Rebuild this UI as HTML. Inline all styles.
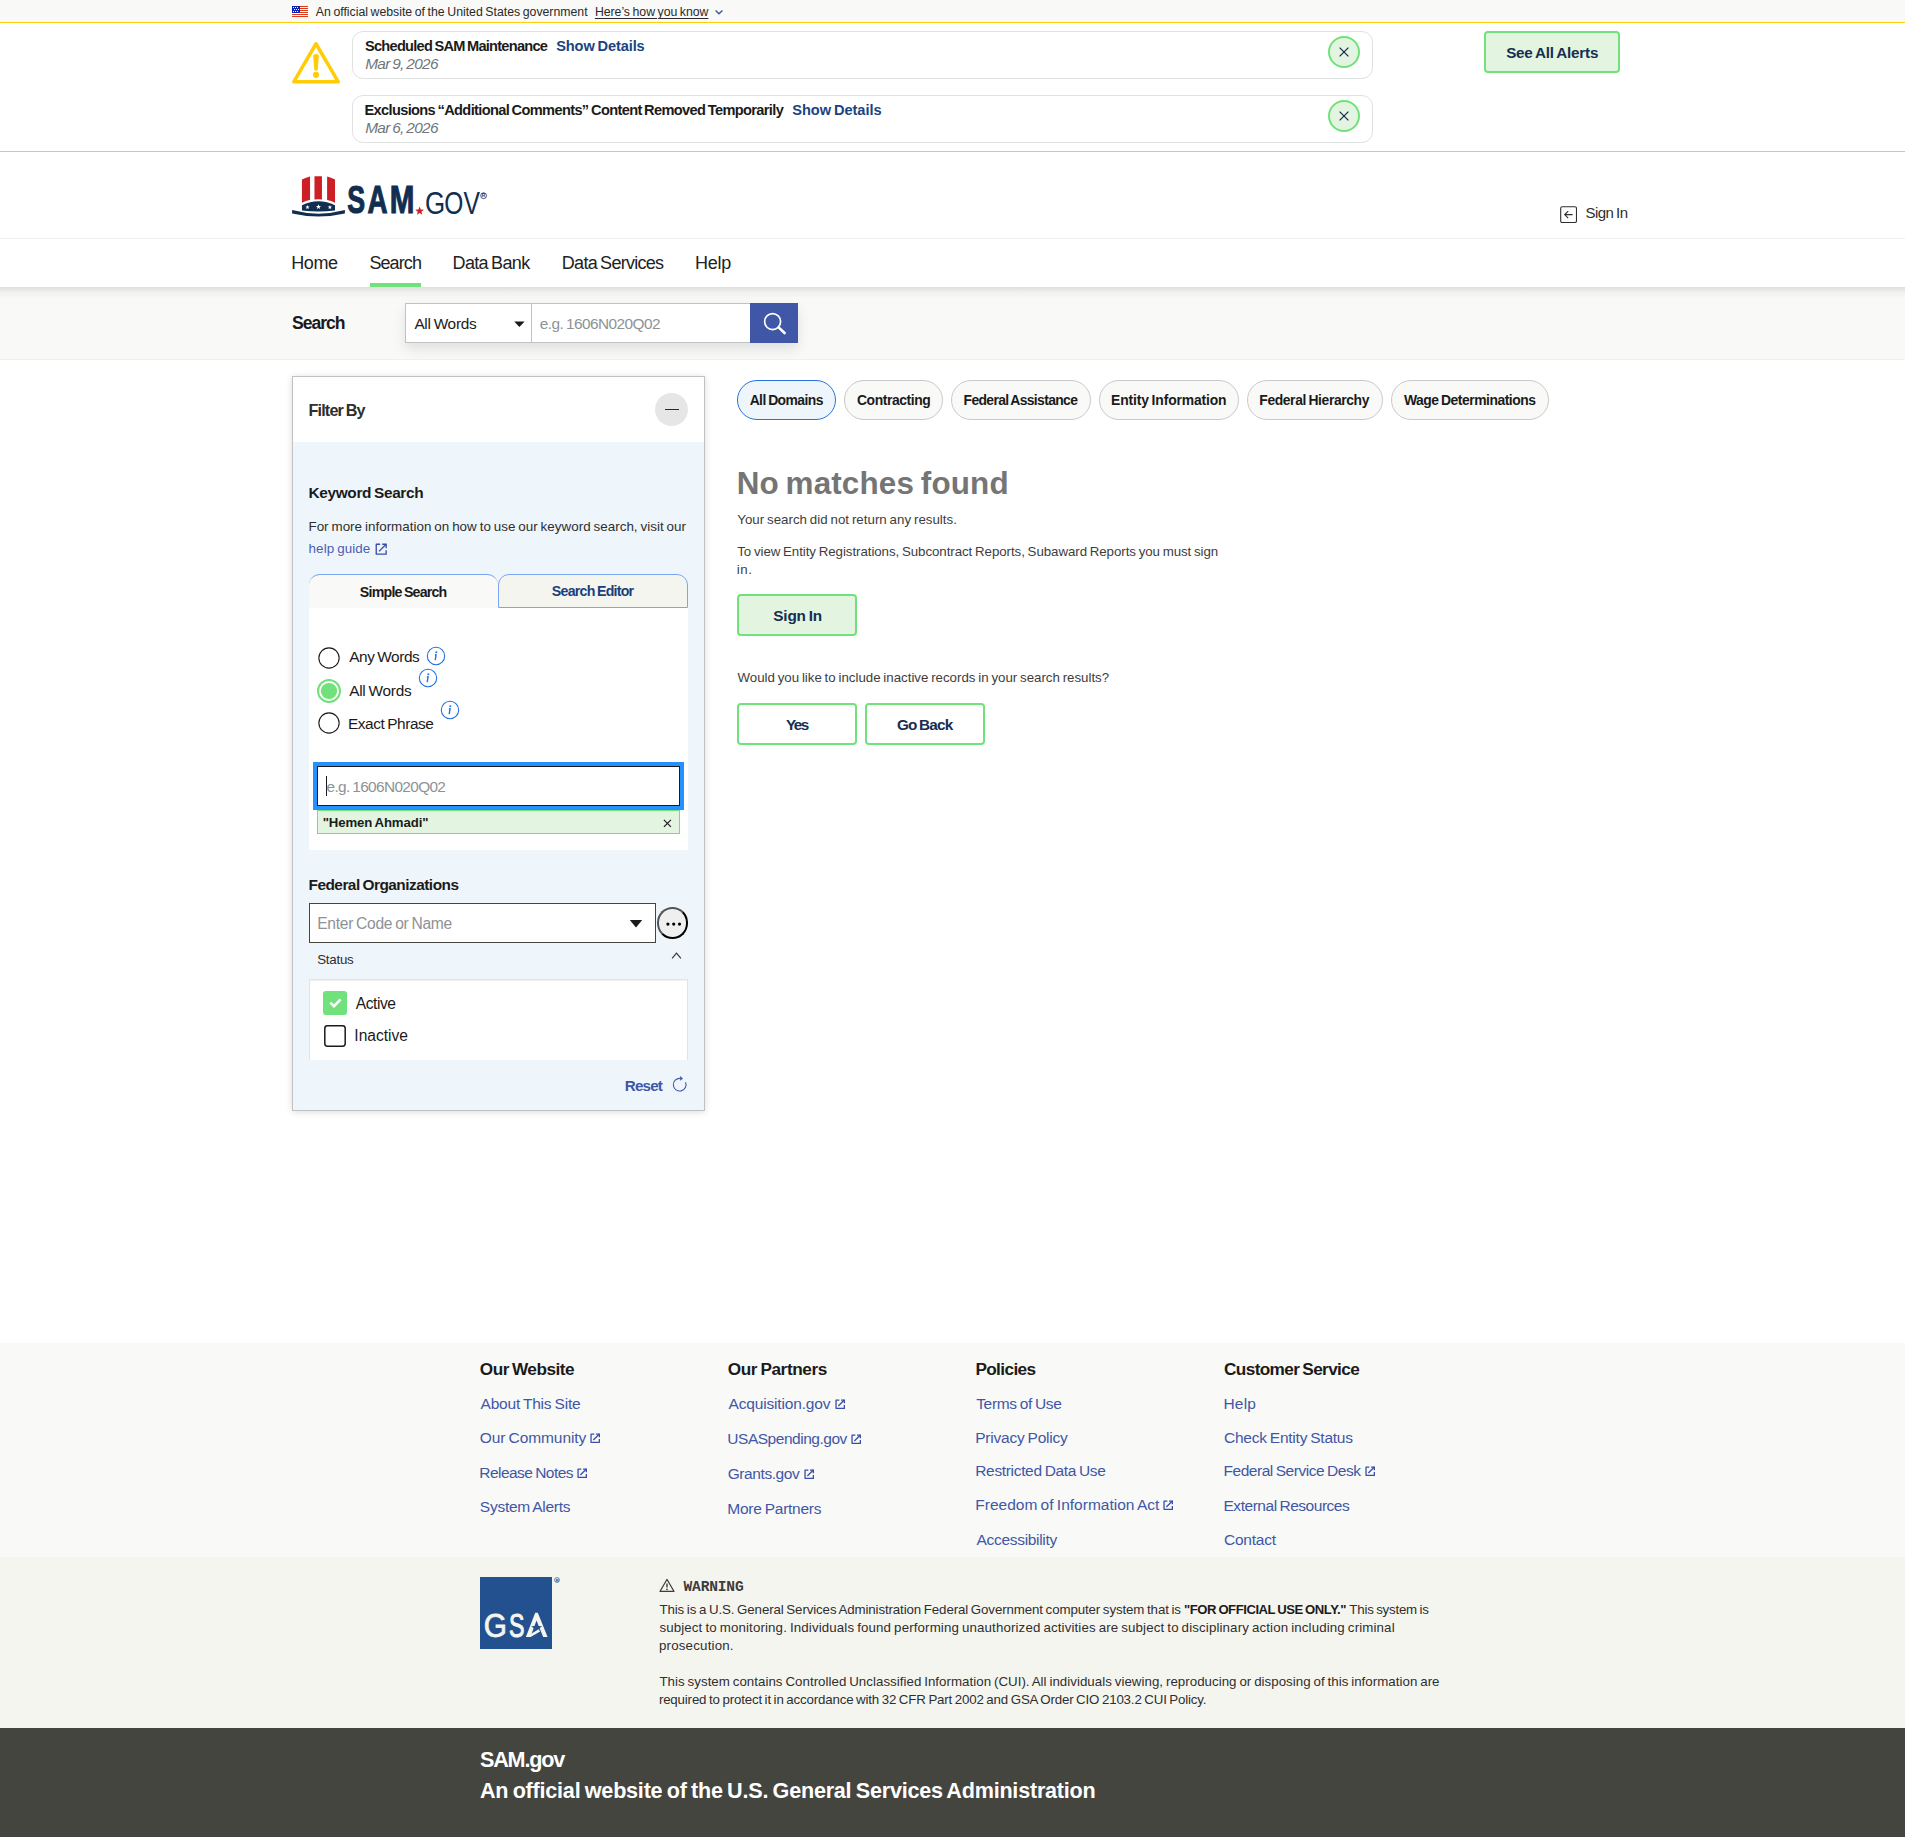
<!DOCTYPE html>
<html lang="en"><head><meta charset="utf-8"><title>SAM.gov | Search</title><style>
html,body{margin:0;padding:0}
body{width:1905px;height:1837px;position:relative;overflow:hidden;background:#fff;
font-family:"Liberation Sans",sans-serif;color:#1b1b1b}
.t{position:absolute;white-space:pre;display:block}
.b{position:absolute;box-sizing:content-box;display:block}
</style></head>
<body>
<div class="b" style="left:0px;top:0px;width:1905px;height:22px;background:#f9f9f7;"></div>
<svg class="b" style="left:292px;top:6px;" width="16" height="11" viewBox="0 0 16 11"><g shape-rendering="crispEdges"><rect width="16" height="11" fill="#fff"/><rect y="0" width="16" height="1" fill="#dc3a1c"/><rect y="2" width="16" height="1" fill="#dc3a1c"/><rect y="4" width="16" height="1" fill="#dc3a1c"/><rect y="6" width="16" height="1" fill="#dc3a1c"/><rect y="8" width="16" height="1" fill="#dc3a1c"/><rect y="10" width="16" height="1" fill="#dc3a1c"/><rect width="8" height="7" fill="#0d21b3"/><rect x="1" y="1" width="1" height="1" fill="#fff"/><rect x="3" y="1" width="1" height="1" fill="#fff"/><rect x="5" y="1" width="1" height="1" fill="#fff"/><rect x="2" y="3" width="1" height="1" fill="#fff"/><rect x="4" y="3" width="1" height="1" fill="#fff"/><rect x="6" y="3" width="1" height="1" fill="#fff"/><rect x="1" y="5" width="1" height="1" fill="#fff"/><rect x="3" y="5" width="1" height="1" fill="#fff"/><rect x="5" y="5" width="1" height="1" fill="#fff"/></g></svg>
<span class="t" style="left:315.80px;top:6.00px;font-size:12.3px;line-height:12.3px;letter-spacing:-0.012px;color:#2a2a2a;word-spacing:-0.80px;">An official website of the United States government</span>
<span class="t" style="left:594.92px;top:6.00px;font-size:12.3px;line-height:12.3px;letter-spacing:-0.041px;color:#2a2a2a;word-spacing:-0.80px;text-decoration:underline;text-underline-offset:1.5px;text-decoration-thickness:1px;">Here’s how you know</span>
<svg class="b" style="left:714px;top:7px;" width="10" height="10" viewBox="0 0 10 10"><path d="M1.6 3.4L5 6.8L8.4 3.4" fill="none" stroke="#3f57a6" stroke-width="1.4"/></svg>
<div class="b" style="left:0px;top:22px;width:1905px;height:1px;background:#ffcd07;"></div>
<div class="b" style="left:0px;top:151px;width:1905px;height:1px;background:#ffcd07;"></div>
<svg class="b" style="left:292px;top:40px;" width="48" height="46" viewBox="0 0 48 46"><path d="M24 3.75L46.25 41.85H1.75Z" fill="none" stroke="#ffcd07" stroke-width="3.5" stroke-linejoin="round"/><path d="M21.2 16.2Q21.2 14 24 14Q26.8 14 26.8 16.2L25.7 30.6H22.3Z" fill="#ffcd07"/><circle cx="24" cy="34.8" r="3.1" fill="#ffcd07"/></svg>
<div class="b" style="left:352px;top:31px;width:1019px;height:45.5px;border:1px solid #dfe1e2;border-radius:11px;background:#fff;"></div>
<span class="t" style="left:365.00px;top:39.00px;font-size:14.6px;line-height:14.6px;letter-spacing:-0.747px;color:#1b1b1b;word-spacing:-0.95px;font-weight:700;">Scheduled SAM Maintenance</span>
<span class="t" style="left:556.20px;top:39.00px;font-size:14.6px;line-height:14.6px;letter-spacing:-0.123px;color:#1a4480;word-spacing:-0.95px;font-weight:700;">Show Details</span>
<span class="t" style="left:365.14px;top:56.00px;font-size:15.4px;line-height:15.4px;letter-spacing:-0.673px;color:#71767a;word-spacing:-1.00px;font-style:italic;">Mar 9, 2026</span>
<svg class="b" style="left:1328px;top:35.7px;" width="32" height="32" viewBox="0 0 32 32"><circle cx="16" cy="16" r="15" fill="#e3f5e1" stroke="#70e17b" stroke-width="2"/><path d="M11.6 11.6L20.4 20.4M20.4 11.6L11.6 20.4" stroke="#162e51" stroke-width="1.3" fill="none"/></svg>
<div class="b" style="left:352px;top:95px;width:1019px;height:45.5px;border:1px solid #dfe1e2;border-radius:11px;background:#fff;"></div>
<span class="t" style="left:364.45px;top:103.00px;font-size:14.6px;line-height:14.6px;letter-spacing:-0.641px;color:#1b1b1b;word-spacing:-0.95px;font-weight:700;">Exclusions “Additional Comments” Content Removed Temporarily</span>
<span class="t" style="left:792.30px;top:103.00px;font-size:14.6px;line-height:14.6px;letter-spacing:-0.059px;color:#1a4480;word-spacing:-0.95px;font-weight:700;">Show Details</span>
<span class="t" style="left:365.14px;top:120.00px;font-size:15.4px;line-height:15.4px;letter-spacing:-0.673px;color:#71767a;word-spacing:-1.00px;font-style:italic;">Mar 6, 2026</span>
<svg class="b" style="left:1328px;top:99.7px;" width="32" height="32" viewBox="0 0 32 32"><circle cx="16" cy="16" r="15" fill="#e3f5e1" stroke="#70e17b" stroke-width="2"/><path d="M11.6 11.6L20.4 20.4M20.4 11.6L11.6 20.4" stroke="#162e51" stroke-width="1.3" fill="none"/></svg>
<div class="b" style="left:1484px;top:31px;width:132px;height:38px;border:2px solid #70e17b;border-radius:4px;background:#e3f5e1;"></div>
<span class="t" style="left:1506.18px;top:45.00px;font-size:15.2px;line-height:15.2px;letter-spacing:-0.200px;color:#162e51;word-spacing:-0.99px;font-weight:700;">See All Alerts</span>
<div class="b" style="left:0px;top:238px;width:1905px;height:1px;background:#f0f0ec;"></div>
<svg class="b" style="left:292px;top:174px;" width="53" height="44" viewBox="0 0 53 44"><path d="M9.96 5.55Q14 3.3 18.05 2.47V25.76Q14 26.6 9.96 28.7Z" fill="#cd2026"/><path d="M22.46 2.3Q26.2 2.05 29.95 2.3V25.4Q26.2 25.15 22.46 25.4Z" fill="#cd2026"/><path d="M35.1 2.6Q39 3.4 43.03 5.55V28.7Q39 26.7 35.1 26Z" fill="#cd2026"/><path d="M9.96 31.3Q26.5 23.2 43.03 31.3V36.6Q26.5 38.6 9.96 36.6Z" fill="#112e51"/><path d="M0.1 36.1Q26.5 43.2 52.9 36.1V39.5Q26.5 45.6 0.1 39.5Z" fill="#112e51"/><polygon points="15.50,30.90 16.07,32.42 17.69,32.49 16.42,33.50 16.85,35.06 15.50,34.17 14.15,35.06 14.58,33.50 13.31,32.49 14.93,32.42" fill="#fff"/><polygon points="26.50,30.20 27.17,31.98 29.07,32.07 27.58,33.25 28.09,35.08 26.50,34.03 24.91,35.08 25.42,33.25 23.93,32.07 25.83,31.98" fill="#fff"/><polygon points="37.90,30.90 38.47,32.42 40.09,32.49 38.82,33.50 39.25,35.06 37.90,34.17 36.55,35.06 36.98,33.50 35.71,32.49 37.33,32.42" fill="#fff"/></svg>
<svg class="b" style="left:340px;top:174px;" width="152" height="46" viewBox="0 0 152 46"><text transform="translate(7.17,39) scale(0.6748,1)" font-family="Liberation Sans, sans-serif" font-weight="700" font-size="39.6" fill="#112e51" stroke="#112e51" stroke-width="1.19">S</text><text transform="translate(27.40,39) scale(0.7022,1)" font-family="Liberation Sans, sans-serif" font-weight="700" font-size="39.6" fill="#112e51" stroke="#112e51" stroke-width="1.14">A</text><text transform="translate(49.78,39) scale(0.7477,1)" font-family="Liberation Sans, sans-serif" font-weight="700" font-size="39.6" fill="#112e51" stroke="#112e51" stroke-width="1.07">M</text><text transform="translate(84.90,39.6) scale(0.8060,1)" font-family="Liberation Sans, sans-serif" font-weight="400" font-size="32.2" fill="#112e51">G</text><text transform="translate(104.20,39.6) scale(0.7617,1)" font-family="Liberation Sans, sans-serif" font-weight="400" font-size="32.2" fill="#112e51">O</text><text transform="translate(123.44,39.6) scale(0.7670,1)" font-family="Liberation Sans, sans-serif" font-weight="400" font-size="32.2" fill="#112e51">V</text><polygon points="79.60,32.50 80.74,35.54 83.97,35.68 81.44,37.70 82.30,40.82 79.60,39.03 76.90,40.82 77.76,37.70 75.23,35.68 78.46,35.54" fill="#cd2026"/><circle cx="143.6" cy="21.7" r="2.9" fill="none" stroke="#112e51" stroke-width="0.8"/><text x="141.85" y="23.45" font-family="Liberation Sans, sans-serif" font-weight="700" font-size="4.8" fill="#112e51">R</text></svg>
<svg class="b" style="left:1560px;top:206.1px;" width="17.2" height="17.2" viewBox="0 0 17.2 17.2"><rect x="0.7" y="0.7" width="15.8" height="15.8" rx="1.6" fill="none" stroke="#2e2e2e" stroke-width="1.1"/><path d="M12.6 8.6H4.8M8.2 5.1L4.7 8.6L8.2 12.1" fill="none" stroke="#2e2e2e" stroke-width="1.1"/></svg>
<span class="t" style="left:1585.42px;top:205.00px;font-size:15.0px;line-height:15.0px;letter-spacing:-0.500px;color:#2e2e2e;word-spacing:-0.98px;">Sign In</span>
<span class="t" style="left:291.31px;top:254.00px;font-size:18.0px;line-height:18.0px;letter-spacing:-0.437px;color:#222;">Home</span>
<span class="t" style="left:369.44px;top:254.00px;font-size:18.0px;line-height:18.0px;letter-spacing:-0.916px;color:#222;">Search</span>
<span class="t" style="left:452.56px;top:254.00px;font-size:18.0px;line-height:18.0px;letter-spacing:-0.656px;color:#222;word-spacing:-1.17px;">Data Bank</span>
<span class="t" style="left:561.81px;top:254.00px;font-size:18.0px;line-height:18.0px;letter-spacing:-0.713px;color:#222;word-spacing:-1.17px;">Data Services</span>
<span class="t" style="left:695.06px;top:254.00px;font-size:18.0px;line-height:18.0px;letter-spacing:-0.277px;color:#222;">Help</span>
<div class="b" style="left:370px;top:283px;width:51px;height:4px;background:#70e17b;"></div>
<div class="b" style="left:0px;top:287px;width:1905px;height:73px;background:#f9f9f7;border-bottom:1px solid #f0f0ec;box-sizing:border-box;"></div>
<div class="b" style="left:0px;top:287px;width:1905px;height:12px;background:linear-gradient(rgba(0,0,0,.11),rgba(0,0,0,.035) 45%,rgba(0,0,0,0));"></div>
<span class="t" style="left:292.02px;top:315.00px;font-size:17.6px;line-height:17.6px;letter-spacing:-1.051px;color:#1b1b1b;font-weight:700;">Search</span>
<div class="b" style="left:405px;top:303px;width:393px;height:40px;box-shadow:0 6px 12px rgba(0,0,0,.10);"></div>
<div class="b" style="left:405px;top:303px;width:127px;height:40px;border:1px solid #c0c3c6;background:#fff;box-sizing:border-box;"></div>
<div class="b" style="left:532px;top:303px;width:218px;height:40px;border:1px solid #c0c3c6;border-left:0;border-right:0;background:#fff;box-sizing:border-box;"></div>
<span class="t" style="left:414.40px;top:316.00px;font-size:15.4px;line-height:15.4px;letter-spacing:-0.283px;color:#1b1b1b;word-spacing:-1.00px;">All Words</span>
<svg class="b" style="left:513px;top:320px;" width="13" height="9" viewBox="0 0 13 9"><path d="M1.2 1.4H11.6L6.4 7Z" fill="#1b1b1b"/></svg>
<span class="t" style="left:539.85px;top:316.00px;font-size:15.4px;line-height:15.4px;letter-spacing:-0.556px;color:#8d9297;word-spacing:-1.00px;">e.g. 1606N020Q02</span>
<div class="b" style="left:750px;top:303px;width:48px;height:40px;background:#3f57a6;"></div>
<svg class="b" style="left:763.2px;top:311.6px;" width="24" height="24" viewBox="0 0 24 24"><circle cx="9.6" cy="9.6" r="8" fill="none" stroke="#fff" stroke-width="1.7"/><path d="M15.6 15.4L21.6 21" stroke="#fff" stroke-width="2.6" stroke-linecap="round"/></svg>
<div class="b" style="left:292px;top:376px;width:411px;height:732.5px;border:1px solid #bfc1c3;background:#eff6fb;box-shadow:0 1px 7px rgba(0,0,0,.14);"></div>
<div class="b" style="left:293px;top:377px;width:411px;height:65px;background:#fff;"></div>
<span class="t" style="left:308.45px;top:402.00px;font-size:16.2px;line-height:16.2px;letter-spacing:-0.832px;color:#2e2e2e;word-spacing:-1.05px;font-weight:700;">Filter By</span>
<div class="b" style="left:655px;top:393px;width:33px;height:33px;border-radius:50%;background:#e6e6e6;"></div>
<div class="b" style="left:665px;top:408.7px;width:14px;height:1.4px;background:#162e51;"></div>
<span class="t" style="left:308.50px;top:485.00px;font-size:15.4px;line-height:15.4px;letter-spacing:-0.345px;color:#1b1b1b;word-spacing:-1.00px;font-weight:700;">Keyword Search</span>
<span class="t" style="left:308.43px;top:520.00px;font-size:13.4px;line-height:13.4px;letter-spacing:0.025px;color:#2e2e2e;word-spacing:-0.87px;">For more information on how to use our keyword search, visit our</span>
<span class="t" style="left:308.60px;top:542.00px;font-size:13.4px;line-height:13.4px;letter-spacing:0.084px;color:#4a5db3;word-spacing:-0.87px;">help guide</span>
<svg class="b" style="left:374.8px;top:542.6px;" width="12.4" height="12.4" viewBox="0 0 12 12"><g fill="none" stroke="#3a4fa8" stroke-width="1.31" stroke-linejoin="miter"><path d="M5 1.2H1.2V10.8H10.8V7" stroke-linejoin="round"/><path d="M7 1.2H10.8V5"/><path d="M10.8 1.2L3.9 8.1"/></g></svg>
<div class="b" style="left:309px;top:574px;width:189px;height:34px;background:#f9f9f7;border-top:1px solid #7ba6f4;border-radius:11px 11px 0 0;box-sizing:border-box;"></div>
<div class="b" style="left:498px;top:574px;width:190px;height:34px;background:#f5f5f0;border:1px solid #7ba6f4;border-radius:11px 11px 0 0;box-sizing:border-box;"></div>
<span class="t" style="left:359.86px;top:585.00px;font-size:14.2px;line-height:14.2px;letter-spacing:-0.788px;color:#1b1b1b;word-spacing:-0.92px;font-weight:700;">Simple Search</span>
<span class="t" style="left:551.86px;top:584.00px;font-size:14.2px;line-height:14.2px;letter-spacing:-0.755px;color:#1a3f7d;word-spacing:-0.92px;font-weight:700;">Search Editor</span>
<div class="b" style="left:309px;top:608px;width:379px;height:242px;background:#fff;"></div>
<svg class="b" style="left:316px;top:645px;" width="26" height="26" viewBox="0 0 26 26"><circle cx="13" cy="13" r="10.15" fill="#fff" stroke="#1b1b1b" stroke-width="1.1"/></svg>
<span class="t" style="left:349.20px;top:649.00px;font-size:15.4px;line-height:15.4px;letter-spacing:-0.431px;color:#1b1b1b;word-spacing:-1.00px;">Any Words</span>
<svg class="b" style="left:316px;top:677.75px;" width="26" height="26" viewBox="0 0 26 26"><circle cx="13" cy="13" r="11.0" fill="#fff" stroke="#70e17b" stroke-width="2"/><circle cx="13" cy="13" r="8.1" fill="#70e17b"/></svg>
<span class="t" style="left:349.20px;top:683.00px;font-size:15.4px;line-height:15.4px;letter-spacing:-0.252px;color:#1b1b1b;word-spacing:-1.00px;">All Words</span>
<svg class="b" style="left:316px;top:710.25px;" width="26" height="26" viewBox="0 0 26 26"><circle cx="13" cy="13" r="10.15" fill="#fff" stroke="#1b1b1b" stroke-width="1.1"/></svg>
<span class="t" style="left:347.97px;top:716.00px;font-size:15.4px;line-height:15.4px;letter-spacing:-0.420px;color:#1b1b1b;word-spacing:-1.00px;">Exact Phrase</span>
<svg class="b" style="left:426.1px;top:646.4px;" width="20" height="20" viewBox="0 0 20 20"><circle cx="10" cy="10" r="8.7" fill="none" stroke="#2672de" stroke-width="1.1"/><circle cx="10.3" cy="6.2" r="1.0" fill="#2672de"/><path d="M8.9 8.8L10.1 8.7L9.2 14.2" fill="none" stroke="#2672de" stroke-width="1.4" stroke-linejoin="round"/></svg>
<svg class="b" style="left:418.2px;top:667.7px;" width="20" height="20" viewBox="0 0 20 20"><circle cx="10" cy="10" r="8.7" fill="none" stroke="#2672de" stroke-width="1.1"/><circle cx="10.3" cy="6.2" r="1.0" fill="#2672de"/><path d="M8.9 8.8L10.1 8.7L9.2 14.2" fill="none" stroke="#2672de" stroke-width="1.4" stroke-linejoin="round"/></svg>
<svg class="b" style="left:440.2px;top:700.2px;" width="20" height="20" viewBox="0 0 20 20"><circle cx="10" cy="10" r="8.7" fill="none" stroke="#2672de" stroke-width="1.1"/><circle cx="10.3" cy="6.2" r="1.0" fill="#2672de"/><path d="M8.9 8.8L10.1 8.7L9.2 14.2" fill="none" stroke="#2672de" stroke-width="1.4" stroke-linejoin="round"/></svg>
<div class="b" style="left:313.3px;top:762.4px;width:362.8px;height:39.8px;border:4px solid #2491ff;background:#fff;"></div>
<div class="b" style="left:317px;top:766px;width:361px;height:38px;border:1px solid #1b1b1b;background:#fff;"></div>
<div class="b" style="left:326.2px;top:776.2px;width:1px;height:20px;background:#1b1b1b;"></div>
<span class="t" style="left:326.55px;top:779.00px;font-size:15.4px;line-height:15.4px;letter-spacing:-0.646px;color:#8d9297;word-spacing:-1.00px;">e.g. 1606N020Q02</span>
<div class="b" style="left:317px;top:810px;width:361px;height:21.5px;border:1px solid #70e17b;background:#e3f5e1;"></div>
<span class="t" style="left:322.64px;top:816.00px;font-size:13.2px;line-height:13.2px;letter-spacing:-0.101px;color:#1b1b1b;word-spacing:-0.86px;font-weight:700;">"Hemen Ahmadi"</span>
<svg class="b" style="left:663px;top:819px;" width="9" height="9" viewBox="0 0 9 9"><path d="M0.9 0.9L7.9 7.9M7.9 0.9L0.9 7.9" stroke="#1b1b1b" stroke-width="1.2" fill="none"/></svg>
<span class="t" style="left:308.50px;top:877.00px;font-size:15.4px;line-height:15.4px;letter-spacing:-0.508px;color:#1b1b1b;word-spacing:-1.00px;font-weight:700;">Federal Organizations</span>
<div class="b" style="left:309px;top:903px;width:345px;height:38px;border:1px solid #454540;background:#fff;"></div>
<span class="t" style="left:317.25px;top:916.00px;font-size:15.6px;line-height:15.6px;letter-spacing:-0.300px;color:#8d9297;word-spacing:-1.01px;">Enter Code or Name</span>
<svg class="b" style="left:629px;top:918.5px;" width="14" height="10" viewBox="0 0 14 10"><path d="M0.8 1H13.2L7 8.6Z" fill="#1b1b1b"/></svg>
<div class="b" style="left:657px;top:907px;width:27px;height:27.5px;border:2px outset #000;border-radius:50%;background:#efefef;"></div>
<svg class="b" style="left:664.5px;top:921px;" width="18" height="6" viewBox="0 0 18 6"><circle cx="2.9" cy="3.1" r="1.6" fill="#000"/><circle cx="8.7" cy="3.1" r="1.6" fill="#000"/><circle cx="14.5" cy="3.1" r="1.6" fill="#000"/></svg>
<span class="t" style="left:317.15px;top:953.00px;font-size:13.3px;line-height:13.3px;letter-spacing:-0.228px;color:#2e2e2e;">Status</span>
<svg class="b" style="left:671px;top:950.6px;" width="12" height="9" viewBox="0 0 12 9"><path d="M1.1 7.3L5.5 2.2L9.9 7.3" fill="none" stroke="#2e2e2e" stroke-width="1.1"/></svg>
<div class="b" style="left:309px;top:979px;width:377px;height:80px;background:#fff;border:1px solid #e3e3e3;border-bottom:0;box-shadow:inset 0 1px 1px rgba(0,0,0,.06);"></div>
<div class="b" style="left:323.3px;top:991.3px;width:23.6px;height:23.6px;background:#70e17b;border-radius:3px;"></div>
<svg class="b" style="left:327.8px;top:996.6px;" width="15" height="12" viewBox="0 0 15 12"><path d="M2.3 5.6L6 9.2L12.6 2.4" fill="none" stroke="#fff" stroke-width="2.7"/></svg>
<span class="t" style="left:355.75px;top:996.00px;font-size:15.6px;line-height:15.6px;letter-spacing:-0.462px;color:#1b1b1b;">Active</span>
<svg class="b" style="left:323px;top:1024px;" width="24" height="24" viewBox="0 0 24 24"><rect x="1.8" y="1.8" width="20.4" height="20.4" rx="2.6" fill="#fff" stroke="#1b1b1b" stroke-width="1.5"/></svg>
<span class="t" style="left:354.35px;top:1028.00px;font-size:15.6px;line-height:15.6px;letter-spacing:-0.025px;color:#1b1b1b;">Inactive</span>
<span class="t" style="left:624.76px;top:1078.00px;font-size:15.2px;line-height:15.2px;letter-spacing:-0.810px;color:#3f57a6;font-weight:700;">Reset</span>
<svg class="b" style="left:672px;top:1075px;" width="18" height="18" viewBox="0 0 18 18"><path d="M13.55 7.2A6.35 6.35 0 1 1 8.2 3.35" fill="none" stroke="#3f57a6" stroke-width="1.1"/><path d="M8.1 1.1L11 3.4L8.1 5.8Z" fill="#3f57a6"/></svg>
<div class="b" style="left:737px;top:380px;width:96.75px;height:38px;border:1px solid #2672de;background:#eff6fb;border-radius:20px;"></div>
<span class="t" style="left:749.65px;top:394.00px;font-size:13.9px;line-height:13.9px;letter-spacing:-0.554px;color:#1b1b1b;word-spacing:-0.90px;font-weight:700;">All Domains</span>
<div class="b" style="left:844.25px;top:380px;width:96.75px;height:38px;border:1px solid #c9c9c9;background:#f9f9f7;border-radius:20px;"></div>
<span class="t" style="left:856.94px;top:394.00px;font-size:13.9px;line-height:13.9px;letter-spacing:-0.402px;color:#1b1b1b;font-weight:700;">Contracting</span>
<div class="b" style="left:951px;top:380px;width:137.75px;height:38px;border:1px solid #c9c9c9;background:#f9f9f7;border-radius:20px;"></div>
<span class="t" style="left:963.60px;top:394.00px;font-size:13.9px;line-height:13.9px;letter-spacing:-0.642px;color:#1b1b1b;word-spacing:-0.90px;font-weight:700;">Federal Assistance</span>
<div class="b" style="left:1099.2px;top:380px;width:137.5999999999999px;height:38px;border:1px solid #c9c9c9;background:#f9f9f7;border-radius:20px;"></div>
<span class="t" style="left:1111.10px;top:394.00px;font-size:13.9px;line-height:13.9px;letter-spacing:-0.146px;color:#1b1b1b;word-spacing:-0.90px;font-weight:700;">Entity Information</span>
<div class="b" style="left:1247px;top:380px;width:133.5999999999999px;height:38px;border:1px solid #c9c9c9;background:#f9f9f7;border-radius:20px;"></div>
<span class="t" style="left:1259.30px;top:394.00px;font-size:13.9px;line-height:13.9px;letter-spacing:-0.399px;color:#1b1b1b;word-spacing:-0.90px;font-weight:700;">Federal Hierarchy</span>
<div class="b" style="left:1391.2px;top:380px;width:155.79999999999995px;height:38px;border:1px solid #c9c9c9;background:#f9f9f7;border-radius:20px;"></div>
<span class="t" style="left:1403.90px;top:394.00px;font-size:13.9px;line-height:13.9px;letter-spacing:-0.475px;color:#1b1b1b;word-spacing:-0.90px;font-weight:700;">Wage Determinations</span>
<span class="t" style="left:736.66px;top:468.00px;font-size:31.4px;line-height:31.4px;letter-spacing:0.145px;color:#757575;word-spacing:-2.04px;font-weight:700;">No matches found</span>
<span class="t" style="left:737.23px;top:513.00px;font-size:13.3px;line-height:13.3px;letter-spacing:0.017px;color:#3d3d3d;word-spacing:-0.86px;">Your search did not return any results.</span>
<span class="t" style="left:737.23px;top:545.00px;font-size:13.3px;line-height:13.3px;letter-spacing:-0.060px;color:#3d3d3d;word-spacing:-0.86px;">To view Entity Registrations, Subcontract Reports, Subaward Reports you must sign</span>
<span class="t" style="left:736.64px;top:563.00px;font-size:13.3px;line-height:13.3px;letter-spacing:0.665px;color:#3d3d3d;">in.</span>
<div class="b" style="left:737px;top:594px;width:116px;height:38px;border:2px solid #70e17b;border-radius:4px;background:#e3f5e1;"></div>
<span class="t" style="left:773.33px;top:608.00px;font-size:15.3px;line-height:15.3px;letter-spacing:-0.192px;color:#162e51;word-spacing:-0.99px;font-weight:700;">Sign In</span>
<span class="t" style="left:737.47px;top:671.00px;font-size:13.3px;line-height:13.3px;letter-spacing:-0.013px;color:#3d3d3d;word-spacing:-0.86px;">Would you like to include inactive records in your search results?</span>
<div class="b" style="left:737px;top:703px;width:116px;height:38px;border:2px solid #70e17b;border-radius:4px;background:#fff;"></div>
<span class="t" style="left:786.02px;top:717.00px;font-size:15.3px;line-height:15.3px;letter-spacing:-1.525px;color:#162e51;font-weight:700;">Yes</span>
<div class="b" style="left:865px;top:703px;width:116px;height:38px;border:2px solid #70e17b;border-radius:4px;background:#fff;"></div>
<span class="t" style="left:896.89px;top:717.00px;font-size:15.3px;line-height:15.3px;letter-spacing:-0.787px;color:#162e51;word-spacing:-0.99px;font-weight:700;">Go Back</span>
<div class="b" style="left:0px;top:1343px;width:1905px;height:214px;background:#f9f9f7;"></div>
<div class="b" style="left:0px;top:1557px;width:1905px;height:171px;background:#f5f5f0;"></div>
<div class="b" style="left:0px;top:1728px;width:1905px;height:109px;background:#454540;"></div>
<span class="t" style="left:479.81px;top:1361.00px;font-size:17.2px;line-height:17.2px;letter-spacing:-0.510px;color:#1b1b1b;word-spacing:-1.12px;font-weight:700;">Our Website</span>
<span class="t" style="left:480.50px;top:1396.00px;font-size:15.5px;line-height:15.5px;letter-spacing:-0.189px;color:#3f57a6;word-spacing:-1.01px;">About This Site</span>
<span class="t" style="left:479.80px;top:1430.00px;font-size:15.5px;line-height:15.5px;letter-spacing:-0.090px;color:#3f57a6;word-spacing:-1.01px;">Our Community</span>
<svg class="b" style="left:590.3px;top:1432.75px;" width="10.4" height="10.4" viewBox="0 0 12 12"><g fill="none" stroke="#3a4fa8" stroke-width="1.50" stroke-linejoin="miter"><path d="M5 1.2H1.2V10.8H10.8V7" stroke-linejoin="round"/><path d="M7 1.2H10.8V5"/><path d="M10.8 1.2L3.9 8.1"/></g></svg>
<span class="t" style="left:479.26px;top:1465.00px;font-size:15.5px;line-height:15.5px;letter-spacing:-0.533px;color:#3f57a6;word-spacing:-1.01px;">Release Notes</span>
<svg class="b" style="left:576.8px;top:1467.5px;" width="10.4" height="10.4" viewBox="0 0 12 12"><g fill="none" stroke="#3a4fa8" stroke-width="1.50" stroke-linejoin="miter"><path d="M5 1.2H1.2V10.8H10.8V7" stroke-linejoin="round"/><path d="M7 1.2H10.8V5"/><path d="M10.8 1.2L3.9 8.1"/></g></svg>
<span class="t" style="left:479.80px;top:1499.00px;font-size:15.5px;line-height:15.5px;letter-spacing:-0.250px;color:#3f57a6;word-spacing:-1.01px;">System Alerts</span>
<span class="t" style="left:727.81px;top:1361.00px;font-size:17.2px;line-height:17.2px;letter-spacing:-0.403px;color:#1b1b1b;word-spacing:-1.12px;font-weight:700;">Our Partners</span>
<span class="t" style="left:728.50px;top:1396.00px;font-size:15.5px;line-height:15.5px;letter-spacing:-0.160px;color:#3f57a6;">Acquisition.gov</span>
<svg class="b" style="left:834.55px;top:1398.75px;" width="10.4" height="10.4" viewBox="0 0 12 12"><g fill="none" stroke="#3a4fa8" stroke-width="1.50" stroke-linejoin="miter"><path d="M5 1.2H1.2V10.8H10.8V7" stroke-linejoin="round"/><path d="M7 1.2H10.8V5"/><path d="M10.8 1.2L3.9 8.1"/></g></svg>
<span class="t" style="left:727.34px;top:1431.00px;font-size:15.5px;line-height:15.5px;letter-spacing:-0.480px;color:#3f57a6;">USASpending.gov</span>
<svg class="b" style="left:851.0999999999999px;top:1433.75px;" width="10.4" height="10.4" viewBox="0 0 12 12"><g fill="none" stroke="#3a4fa8" stroke-width="1.50" stroke-linejoin="miter"><path d="M5 1.2H1.2V10.8H10.8V7" stroke-linejoin="round"/><path d="M7 1.2H10.8V5"/><path d="M10.8 1.2L3.9 8.1"/></g></svg>
<span class="t" style="left:727.73px;top:1466.00px;font-size:15.5px;line-height:15.5px;letter-spacing:-0.419px;color:#3f57a6;">Grants.gov</span>
<svg class="b" style="left:803.8px;top:1468.75px;" width="10.4" height="10.4" viewBox="0 0 12 12"><g fill="none" stroke="#3a4fa8" stroke-width="1.50" stroke-linejoin="miter"><path d="M5 1.2H1.2V10.8H10.8V7" stroke-linejoin="round"/><path d="M7 1.2H10.8V5"/><path d="M10.8 1.2L3.9 8.1"/></g></svg>
<span class="t" style="left:727.26px;top:1501.00px;font-size:15.5px;line-height:15.5px;letter-spacing:-0.242px;color:#3f57a6;word-spacing:-1.01px;">More Partners</span>
<span class="t" style="left:975.38px;top:1361.00px;font-size:17.2px;line-height:17.2px;letter-spacing:-0.608px;color:#1b1b1b;font-weight:700;">Policies</span>
<span class="t" style="left:976.19px;top:1396.00px;font-size:15.5px;line-height:15.5px;letter-spacing:-0.324px;color:#3f57a6;word-spacing:-1.01px;">Terms of Use</span>
<span class="t" style="left:975.26px;top:1430.00px;font-size:15.5px;line-height:15.5px;letter-spacing:-0.230px;color:#3f57a6;word-spacing:-1.01px;">Privacy Policy</span>
<span class="t" style="left:975.26px;top:1463.00px;font-size:15.5px;line-height:15.5px;letter-spacing:-0.335px;color:#3f57a6;word-spacing:-1.01px;">Restricted Data Use</span>
<span class="t" style="left:975.26px;top:1497.00px;font-size:15.5px;line-height:15.5px;letter-spacing:0.006px;color:#3f57a6;word-spacing:-1.01px;">Freedom of Information Act</span>
<svg class="b" style="left:1163.0px;top:1499.75px;" width="10.4" height="10.4" viewBox="0 0 12 12"><g fill="none" stroke="#3a4fa8" stroke-width="1.50" stroke-linejoin="miter"><path d="M5 1.2H1.2V10.8H10.8V7" stroke-linejoin="round"/><path d="M7 1.2H10.8V5"/><path d="M10.8 1.2L3.9 8.1"/></g></svg>
<span class="t" style="left:976.50px;top:1532.00px;font-size:15.5px;line-height:15.5px;letter-spacing:-0.304px;color:#3f57a6;">Accessibility</span>
<span class="t" style="left:1224.06px;top:1361.00px;font-size:17.2px;line-height:17.2px;letter-spacing:-0.625px;color:#1b1b1b;word-spacing:-1.12px;font-weight:700;">Customer Service</span>
<span class="t" style="left:1223.51px;top:1396.00px;font-size:15.5px;line-height:15.5px;letter-spacing:0.169px;color:#3f57a6;">Help</span>
<span class="t" style="left:1223.97px;top:1430.00px;font-size:15.5px;line-height:15.5px;letter-spacing:-0.233px;color:#3f57a6;word-spacing:-1.01px;">Check Entity Status</span>
<span class="t" style="left:1223.51px;top:1463.00px;font-size:15.5px;line-height:15.5px;letter-spacing:-0.459px;color:#3f57a6;word-spacing:-1.01px;">Federal Service Desk</span>
<svg class="b" style="left:1365.0px;top:1465.75px;" width="10.4" height="10.4" viewBox="0 0 12 12"><g fill="none" stroke="#3a4fa8" stroke-width="1.50" stroke-linejoin="miter"><path d="M5 1.2H1.2V10.8H10.8V7" stroke-linejoin="round"/><path d="M7 1.2H10.8V5"/><path d="M10.8 1.2L3.9 8.1"/></g></svg>
<span class="t" style="left:1223.51px;top:1498.00px;font-size:15.5px;line-height:15.5px;letter-spacing:-0.470px;color:#3f57a6;word-spacing:-1.01px;">External Resources</span>
<span class="t" style="left:1223.97px;top:1532.00px;font-size:15.5px;line-height:15.5px;letter-spacing:-0.216px;color:#3f57a6;">Contact</span>
<svg class="b" style="left:480px;top:1577px;" width="72" height="72" viewBox="0 0 72 72"><rect width="72" height="72" fill="#23508f"/><text transform="translate(3.66,60.0) scale(0.8756,1)" font-family="Liberation Sans, sans-serif" font-weight="400" font-size="34" fill="#f5f5f0" stroke="#f5f5f0" stroke-width="0.80">G</text><text transform="translate(29.11,60.0) scale(0.6825,1)" font-family="Liberation Sans, sans-serif" font-weight="400" font-size="34" fill="#f5f5f0" stroke="#f5f5f0" stroke-width="1.03">S</text><path d="M55.2 35.8H57.8L67.6 60H63.2L56.5 43.4L50.4 60H45.9Z" fill="#f5f5f0"/><polygon points="56.60,45.20 58.01,48.96 62.02,49.14 58.88,51.64 59.95,55.51 56.60,53.29 53.25,55.51 54.32,51.64 51.18,49.14 55.19,48.96" fill="#23508f"/><path d="M45.9 60H50.6L60.2 54.6L58.6 52.3Z" fill="#f5f5f0"/></svg>
<svg class="b" style="left:554.4px;top:1577.2px;" width="6" height="6" viewBox="0 0 6 6"><circle cx="3" cy="3" r="2.4" fill="none" stroke="#23508f" stroke-width="0.7"/><text x="1.7" y="4.5" font-family="Liberation Sans, sans-serif" font-weight="700" font-size="4" fill="#23508f">R</text></svg>
<svg class="b" style="left:659.2px;top:1577.7px;" width="16" height="15" viewBox="0 0 16 15"><path d="M8 1.4L15 13.4H1Z" fill="none" stroke="#3d3d3d" stroke-width="1.1" stroke-linejoin="round"/><path d="M8 5.6V9.4" stroke="#3d3d3d" stroke-width="1.4"/><circle cx="8" cy="11.3" r="0.85" fill="#3d3d3d"/></svg>
<span class="t" style="left:683.50px;top:1580.00px;font-size:14.6px;line-height:14.6px;letter-spacing:-0.188px;color:#3d3d3d;font-weight:700;font-family:'Liberation Mono', monospace;">WARNING</span>
<span class="t" style="left:659.48px;top:1603.00px;font-size:13.3px;line-height:13.3px;letter-spacing:-0.112px;color:#2e2e2e;word-spacing:-0.86px;">This is a U.S. General Services Administration Federal Government computer system that is</span>
<span class="t" style="left:1184.05px;top:1603.00px;font-size:13.1px;line-height:13.1px;letter-spacing:-0.457px;color:#1b1b1b;word-spacing:-0.85px;font-weight:700;">"FOR OFFICIAL USE ONLY."</span>
<span class="t" style="left:1349.33px;top:1603.00px;font-size:13.3px;line-height:13.3px;letter-spacing:-0.223px;color:#2e2e2e;word-spacing:-0.86px;">This system is</span>
<span class="t" style="left:659.38px;top:1621.00px;font-size:13.3px;line-height:13.3px;letter-spacing:0.133px;color:#2e2e2e;word-spacing:-0.86px;">subject to monitoring. Individuals found performing unauthorized activities are subject to disciplinary action including criminal</span>
<span class="t" style="left:658.92px;top:1639.00px;font-size:13.3px;line-height:13.3px;letter-spacing:0.202px;color:#2e2e2e;">prosecution.</span>
<span class="t" style="left:659.48px;top:1675.00px;font-size:13.3px;line-height:13.3px;letter-spacing:0.033px;color:#2e2e2e;word-spacing:-0.86px;">This system contains Controlled Unclassified Information (CUI). All individuals viewing, reproducing or disposing of this information are</span>
<span class="t" style="left:658.89px;top:1693.00px;font-size:13.3px;line-height:13.3px;letter-spacing:-0.164px;color:#2e2e2e;word-spacing:-0.86px;">required to protect it in accordance with 32 CFR Part 2002 and GSA Order CIO 2103.2 CUI Policy.</span>
<span class="t" style="left:479.91px;top:1749.00px;font-size:21.6px;line-height:21.6px;letter-spacing:-1.166px;color:#fff;font-weight:700;">SAM.gov</span>
<span class="t" style="left:479.96px;top:1780.00px;font-size:21.6px;line-height:21.6px;letter-spacing:-0.229px;color:#fff;word-spacing:-1.40px;font-weight:700;">An official website of the U.S. General Services Administration</span>
</body></html>
